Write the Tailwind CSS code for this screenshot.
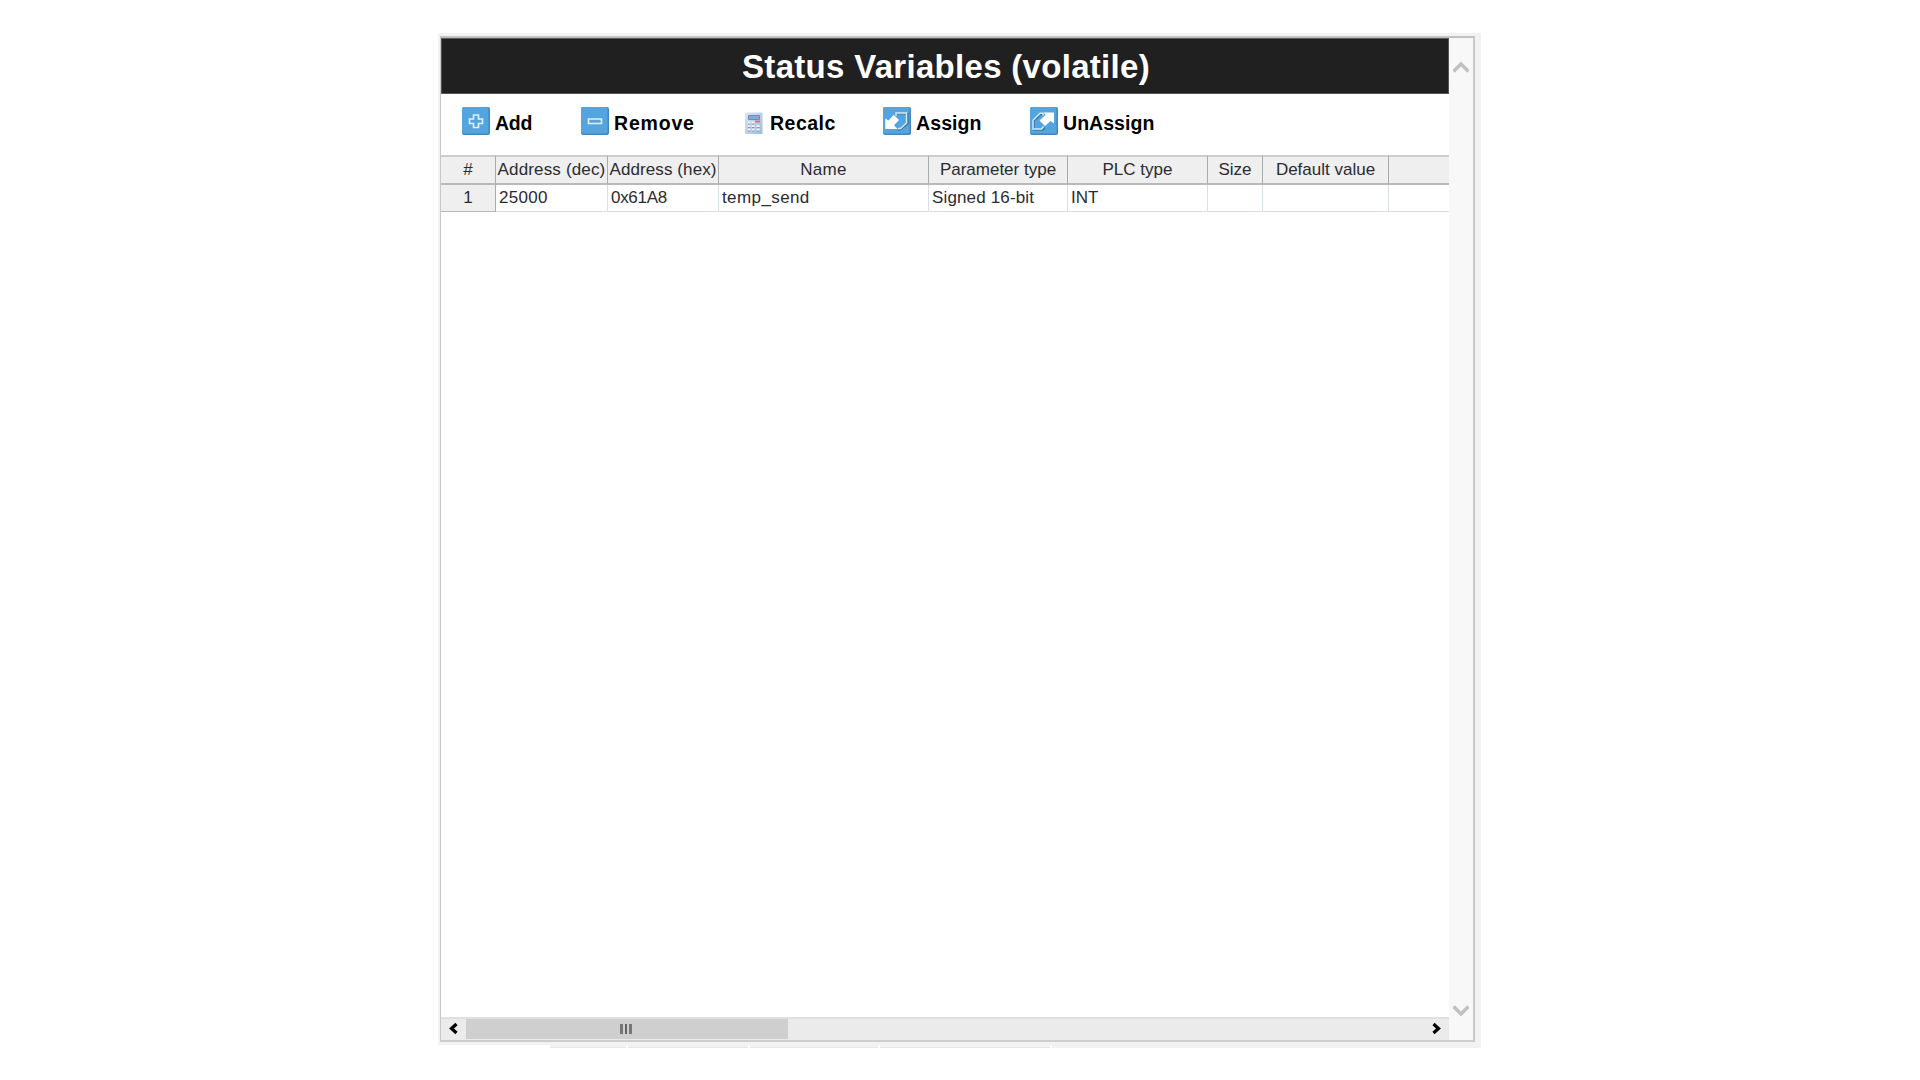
<!DOCTYPE html>
<html lang="en">
<head>
<meta charset="utf-8">
<title>Status Variables</title>
<script src="https://cdn.jsdelivr.net/npm/@tailwindcss/browser@4"></script>
</head>
<body class="bg-white w-[1920px] h-[1080px] overflow-hidden pl-[438px] pt-[33px] font-['Liberation_Sans',Arial,sans-serif] text-[#2b2b33]">
<main class="w-[1043px] h-[1012px] bg-[#f2f2f2] pl-[2px] pt-[3px]">
  <section class="w-[1035px] h-[1006px] border-2 border-l border-t-[#c2c2c2] border-x-[#c8c8c8] border-b-[#cdcdcd] bg-white flex">
    <div class="w-[1008px] flex flex-col">
      <header class="h-[56px] shrink-0 bg-[#202020] border border-[#555] flex items-center justify-center text-white text-[33px] font-bold leading-none tracking-[0.3px] pl-[2px] pt-[1px] whitespace-nowrap">Status Variables (volatile)</header>
      <nav class="h-[61px] shrink-0 flex items-start pt-[13px] pl-[21px] text-[19.5px] leading-[28px] font-bold text-black whitespace-nowrap">
        <div class="w-[119px] flex gap-[5px]">
          <svg class="size-7 shrink-0" viewBox="0 0 28 28"><rect width="28" height="28" rx="2" fill="#4188bd"/><rect width="26.5" height="26.5" rx="2" fill="#54a5df"/><path d="M11.500 8h5v4h4v4.500h-4v4h-5v-4h-4V12h4z" fill="#54a5df" stroke="#e3eff8" stroke-width="1.6"/></svg>
          <span class="pt-[2px] tracking-[-0.300px]">Add</span>
        </div>
        <div class="w-[164px] flex gap-[5px]">
          <svg class="size-7 shrink-0" viewBox="0 0 28 28"><rect width="28" height="28" rx="2" fill="#4188bd"/><rect width="26.5" height="26.5" rx="2" fill="#54a5df"/><path d="M7.500 12h13v4.500h-13z" fill="#54a5df" stroke="#e3eff8" stroke-width="1.6"/></svg>
          <span class="pt-[2px] tracking-[0.800px]">Remove</span>
        </div>
        <div class="w-[138px] flex gap-[7px]">
          <svg class="w-[18px] h-7 shrink-0" viewBox="0 0 18 28"><defs><linearGradient id="calc" x2="1" y2="1"><stop stop-color="#dbe6f2"/><stop offset="1" stop-color="#9dbbdc"/></linearGradient></defs><rect y="5.500" width="17.500" height="21.500" rx="1" fill="url(#calc)"/><path d="M3.500 8.500h11v4h-11z" fill="#88a9cf" stroke="#6c8eb9"/><path d="M3 16h2.500M7 16h2.500M3 19.500h2.500M7 19.500h2.500M11.500 19.500h3M3 23h2.500M7 23h2.500M11.500 23h3" stroke="#f4f8fc" stroke-width="2.600"/><path d="M3 17h2.500M7 17h2.500M3 20.500h2.500M7 20.500h2.500M11.500 20.500h3M3 24h2.500M7 24h2.500M11.500 24h3" stroke="#7395bf" stroke-width="1"/><path d="M10 14.500h5" stroke="#ee6c6c" stroke-width="2"/></svg>
          <span class="pt-[2px] tracking-[0.500px]">Recalc</span>
        </div>
        <div class="w-[147px] flex gap-[5px]">
          <svg class="size-7 shrink-0" viewBox="0 0 28 28"><rect width="28" height="28" rx="2" fill="#4188bd"/><rect width="26.500" height="26.500" rx="2" fill="#54a5df"/><path d="M13 7V5.700h11v10L16 22h-2" fill="none" stroke="#357cae" stroke-width="1.500" transform="translate(1 1)"/><path d="M13 9V6H23.500V16L17.500 21.500H15" fill="none" stroke="#d8e9f6" stroke-width="1.400"/><path d="M10.700 8l5.300 5-5 5.300 3.500 3.700H2.300V11.500l3.200 2z" fill="#fff"/></svg>
          <span class="pt-[2px] tracking-[0.100px]">Assign</span>
        </div>
        <div class="flex gap-[5px]">
          <svg class="size-7 shrink-0" viewBox="0 0 28 28"><rect width="28" height="28" rx="2" fill="#4188bd"/><rect width="26.500" height="26.500" rx="2" fill="#54a5df"/><path d="M12 6.500H10L3 13v9h9l2-2.500" fill="none" stroke="#357cae" stroke-width="1.500" transform="translate(1 1)"/><path d="M13 8.500V6.200H10L3 13.200V22h8.500l2-2.500" fill="none" stroke="#d8e9f6" stroke-width="1.400"/><path d="M13.500 5.500H24V16.500l-3.500-2.500-5.500 5-5.500-5.500 6-5.500z" fill="#fff"/></svg>
          <span class="pt-[2px] tracking-[0.050px]">UnAssign</span>
        </div>
      </nav>
      <table class="w-[1008px] table-fixed border-separate border-spacing-0 text-[17px] leading-[26px] whitespace-nowrap">
        <colgroup><col class="w-[55px]"><col class="w-[112px]"><col class="w-[111px]"><col class="w-[210px]"><col class="w-[139px]"><col class="w-[140px]"><col class="w-[55px]"><col class="w-[126px]"><col></colgroup>
        <thead>
          <tr class="h-[30px] bg-[#efefef] *:p-0 *:font-normal *:border-t-2 *:border-t-[#cecece] *:border-b-2 *:border-b-[#b9b9b9] *:border-r *:border-r-[#aaa]">
            <th>#</th><th><span class="tracking-[0.150px]">Address (dec)</span></th><th><span class="tracking-[0.100px]">Address (hex)</span></th><th><span class="tracking-[0.300px]">Name</span></th><th>Parameter type</th><th>PLC type</th><th>Size</th><th>Default value</th><th class="border-r-0!"></th>
          </tr>
        </thead>
        <tbody>
          <tr class="h-[27px] *:p-0 *:pl-[3px] *:text-left *:border-b *:border-b-[#d9deec] *:border-r *:border-r-[#d9deec]">
            <td class="bg-[#efefef] pl-0! text-center! border-r-[#aaa]! border-b-[#b9b9b9]!">1</td><td class="tracking-[0.300px]">25000</td><td class="tracking-[-0.300px]">0x61A8</td><td class="tracking-[0.400px]">temp_send</td><td class="tracking-[0.150px]">Signed 16-bit</td><td>INT</td><td></td><td></td><td class="border-r-0!"></td>
          </tr>
        </tbody>
      </table>
      <div class="mt-auto h-[23px] shrink-0 bg-[#ebebeb] border-t-2 border-t-[#e0e0e0] flex justify-between">
        <div class="flex">
          <svg class="w-[25px] h-[21px]" viewBox="0 0 25 21"><path d="M15.500 5L10.500 9.500l5 4.500" fill="none" stroke="#000" stroke-width="3.200"/></svg>
          <div class="w-[322px] h-[20px] bg-[#cfcfcf] flex items-center justify-center gap-[2px] pr-[3px]"><i class="w-[3px] h-[10px] bg-[#777]"></i><i class="w-[2px] h-[10px] bg-[#666]"></i><i class="w-[3px] h-[10px] bg-[#777]"></i></div>
        </div>
        <svg class="w-[25px] h-[21px]" viewBox="0 0 25 21"><path d="M9.500 5l5 4.500-5 4.500" fill="none" stroke="#000" stroke-width="3.200"/></svg>
      </div>
    </div>
    <aside class="flex-1 bg-[#f8f8f8] flex flex-col justify-between pl-[4px] pt-[22px] pb-[22px]">
      <svg class="w-[16px] h-[15px]" viewBox="0 0 16 15"><path d="M.5 11.500L8 4l7.500 7.500" fill="none" stroke="#c1c1c1" stroke-width="3.600"/></svg>
      <svg class="w-[16px] h-[15px]" viewBox="0 0 16 15"><path d="M.5 3.500L8 11l7.500-7.500" fill="none" stroke="#c1c1c1" stroke-width="3.600"/></svg>
    </aside>
  </section>
</main>
<div class="w-[1043px] h-[3px] flex gap-[2px]"><div class="w-[110px]"></div><div class="w-[76px] bg-[#f2f2f2] border-b border-[#e8e8ea]"></div><div class="w-[120px] bg-[#f2f2f2] border-b border-[#e8e8ea]"></div><div class="w-[128px] bg-[#f2f2f2] border-b border-[#e8e8ea]"></div><div class="w-[170px] bg-[#f2f2f2] border-b border-[#e5e5ea]"></div><div class="flex-1 bg-[#f2f2f2]"></div></div>
</body>
</html>
